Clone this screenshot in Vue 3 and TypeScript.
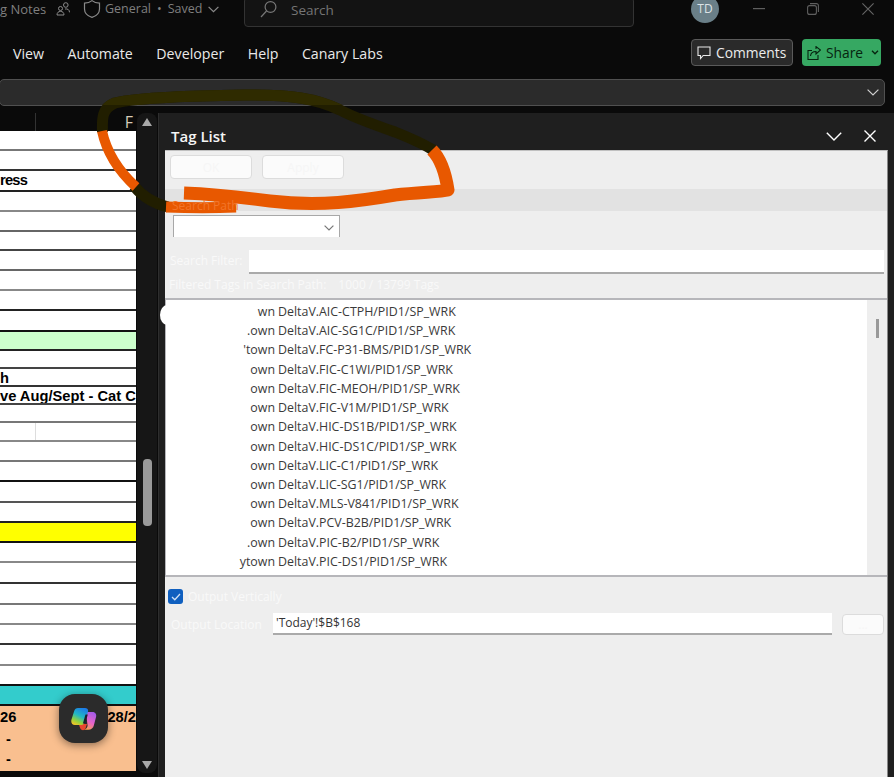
<script setup lang="ts">
interface SheetRow {
  h: number;
  line: string;
  bg?: string;
  text?: string;
  tight?: boolean;
  split?: boolean;
}

const sheetRows: SheetRow[] = [
  { h: 20, line: "#777" },
  { h: 20, line: "#333" },
  { h: 21, line: "#222", text: "ress", tight: true },
  { h: 20, line: "#888" },
  { h: 20, line: "#666" },
  { h: 19, line: "#444" },
  { h: 20, line: "#666" },
  { h: 20, line: "#888" },
  { h: 20, line: "#222" },
  { h: 21, line: "#111" },
  { h: 19, line: "#222", bg: "#ccffcc" },
  { h: 18, line: "#444" },
  { h: 18, line: "#333", text: "h" },
  { h: 18, line: "#444", text: "ve Aug/Sept - Cat C" },
  { h: 18, line: "#777" },
  { h: 19, line: "#888", split: true },
  { h: 20, line: "#777" },
  { h: 20, line: "#111" },
  { h: 21, line: "#555" },
  { h: 20, line: "#222" },
  { h: 20, line: "#111", bg: "#ffff00" },
  { h: 20, line: "#888" },
  { h: 21, line: "#333" },
  { h: 21, line: "#777" },
  { h: 20, line: "#888" },
  { h: 20, line: "#333" },
  { h: 21, line: "#888" },
  { h: 20, line: "#111" },
  { h: 20, line: "#111", bg: "#33cccc" },
];

const tags = [
  ["wn", "AIC-CTPH"],
  [".own", "AIC-SG1C"],
  ["'town", "FC-P31-BMS"],
  ["own", "FIC-C1WI"],
  ["own", "FIC-MEOH"],
  ["own", "FIC-V1M"],
  ["own", "HIC-DS1B"],
  ["own", "HIC-DS1C"],
  ["own", "LIC-C1"],
  ["own", "LIC-SG1"],
  ["own", "MLS-V841"],
  ["own", "PCV-B2B"],
  [".own", "PIC-B2"],
  ["ytown", "PIC-DS1"],
];

const tabs = ["View", "Automate", "Developer", "Help", "Canary Labs"];
const olive =
  "M102.500 132C102 118 102 108 115 103C140 97 200 96 250 95C290 95 315 98 340 110C355 118 372 124 395 132C410 138 422 143 433 150M134 186C142 196 152 203 168 207";
</script>

<template>
  <div class="app">
    <header class="titlebar">
      <span class="doc">g Notes</span>
      <svg class="people" width="14" height="14" viewBox="0 0 14 14" fill="none" stroke="#8a8a8a">
        <circle cx="4.5" cy="6.5" r="2" />
        <path d="M1 13c0-2.4 1.4-3.6 3.5-3.6S8 10.600 8 13z" />
        <circle cx="9.800" cy="3" r="2.300" />
        <path d="M9 7c2.600-.5 4.500.8 4.500 3.300" />
      </svg>
      <svg class="shield" width="18" height="18" viewBox="0 0 18 18" fill="none" stroke="#8a8a8a" stroke-width="1.200">
        <path d="M9 .6c2 1.700 4.500 2.500 7.500 2.500v5.800c0 4-2.500 6.800-7.500 8.500-5-1.700-7.500-4.500-7.500-8.500V3.100C4.500 3.100 7 2.300 9 .6z" />
      </svg>
      <span class="saved">General<i class="dot">•</i>Saved</span>
      <svg class="saved-chev" width="11" height="7" viewBox="0 0 11 7" fill="none" stroke="#8a8a8a" stroke-width="1.200">
        <path d="M.6.8l4.900 4.900L10.400.8" />
      </svg>
      <div class="searchbox">
        <svg width="17" height="18" viewBox="0 0 17 18" fill="none" stroke="#777" stroke-width="1.200">
          <circle cx="10.500" cy="6" r="5.400" />
          <path d="M6.500 10L1 16" />
        </svg>
        <span>Search</span>
      </div>
      <div class="avatar">TD</div>
      <svg class="win-min" width="12" height="2" viewBox="0 0 12 2"><rect width="12" height="1.200" fill="#5f5f5f" /></svg>
      <svg class="win-max" width="12" height="12" viewBox="0 0 12 12" fill="none" stroke="#5f5f5f" stroke-width="1.100">
        <rect x=".6" y="2.600" width="8.800" height="8.800" rx="2" />
        <path d="M3 .6h6.400A2 2 0 0 1 11.400 2.600V9" />
      </svg>
      <svg class="win-close" width="12" height="12" viewBox="0 0 12 12" stroke="#666" stroke-width="1.100">
        <path d="M.4.400l11.200 11.200M11.600.4L.4 11.600" />
      </svg>
    </header>

    <nav class="tabs">
      <span v-for="tab in tabs" :key="tab" class="tab">{{ tab }}</span>
      <button class="comments">
        <svg width="14" height="14" viewBox="0 0 14 14" fill="none" stroke="#e8e8e8" stroke-width="1.100">
          <path d="M1 1h12v8.500H6.200L3.500 12.500V9.500H1z" />
        </svg>
        Comments
      </button>
      <button class="share">
        <svg width="14" height="14" viewBox="0 0 14 14" fill="none" stroke="#06240f" stroke-width="1.100">
          <path d="M5 4.500H1v9h10V9" />
          <path d="M3.500 10c.3-3 2.500-4.500 5.500-4.500V8L13.500 4 9 .6v2.300" />
        </svg>
        Share
        <svg class="share-chev" width="8" height="5" viewBox="0 0 8 5" fill="none" stroke="#06240f" stroke-width="1.300">
          <path d="M1 .8l3 3 3-3" />
        </svg>
      </button>
    </nav>

    <div class="formula-row">
      <div class="formula">
        <svg width="12" height="7" viewBox="0 0 12 7" fill="none" stroke="#cfcfcf" stroke-width="1.200">
          <path d="M.6.600L6 6l5.400-5.400" />
        </svg>
      </div>
    </div>

    <main class="workspace">
      <section class="sheet">
        <div class="col-head">
          <i class="col-sep"></i>
          <span class="col-f">F</span>
        </div>
        <div
          v-for="(row, i) in sheetRows"
          :key="i"
          class="row"
          :style="{ height: row.h + 'px', borderBottomColor: row.line, background: row.bg }"
        >
          <span v-if="row.text" :class="{ tight: row.tight }">{{ row.text }}</span>
          <i v-if="row.split" class="cell-sep"></i>
        </div>
        <div class="totals">
          <div class="totals-head"><span>26</span><span>28/2</span></div>
          <div class="dash">-</div>
          <div class="dash">-</div>
        </div>
      </section>

      <div class="vscroll">
        <div class="track">
          <i class="arrow-up"></i>
          <i class="thumb"></i>
          <i class="arrow-down"></i>
        </div>
      </div>

      <aside class="pane">
        <div class="pane-title">
          <span>Tag List</span>
          <svg class="pane-chev" width="16" height="9" viewBox="0 0 16 9" fill="none" stroke="#fff" stroke-width="1.400">
            <path d="M.8.800L8 8l7.200-7.200" />
          </svg>
          <svg class="pane-x" width="12" height="12" viewBox="0 0 12 12" stroke="#fff" stroke-width="1.400">
            <path d="M.5.500l11 11M11.500.5l-11 11" />
          </svg>
        </div>
        <div class="pane-body">
          <div class="toolbar">
            <button class="ghost">OK</button>
            <button class="ghost">Apply</button>
          </div>
          <div class="section-head"><span>Search Path</span></div>
          <div class="select">
            <svg width="10" height="6" viewBox="0 0 10 6" fill="none" stroke="#777" stroke-width="1.200">
              <path d="M.6.600L5 5 9.400.6" />
            </svg>
          </div>
          <div class="filter-row">
            <label>Search Filter:</label>
            <div class="field"></div>
          </div>
          <div class="count-row">
            <span>Filtered Tags in Search Path:</span>
            <span>1000 / 13799 Tags</span>
          </div>
          <div class="list">
            <i class="bump"></i>
            <ul>
              <li v-for="tag in tags" :key="tag[1]">
                <span class="prefix">{{ tag[0] }}</span>
                <span>DeltaV.{{ tag[1] }}/PID1/SP_WRK</span>
              </li>
            </ul>
            <div class="list-scroll"><i></i></div>
          </div>
          <div class="check-row">
            <span class="check">
              <svg width="10" height="8" viewBox="0 0 10 8" fill="none" stroke="#cfe0f5" stroke-width="1.300">
                <path d="M1 4l2.800 2.800L9 1" />
              </svg>
            </span>
            <span>Output Vertically</span>
          </div>
          <div class="location-row">
            <label>Output Location</label>
            <div class="field loc">'Today'!$B$168</div>
            <button class="ghost small">...</button>
          </div>
        </div>
      </aside>
    </main>

    <div class="copilot">
      <svg width="26" height="26" viewBox="0 0 26 26">
        <defs>
          <linearGradient id="lobeA" x1="0.700" y1="0" x2="0.200" y2="1">
            <stop offset="0" stop-color="#1c7be8" />
            <stop offset="0.450" stop-color="#21b8c4" />
            <stop offset="0.750" stop-color="#8fd13f" />
            <stop offset="1" stop-color="#f7c325" />
          </linearGradient>
          <linearGradient id="lobeB" x1="0.700" y1="0" x2="0.300" y2="1">
            <stop offset="0" stop-color="#a35be8" />
            <stop offset="0.550" stop-color="#e764c8" />
            <stop offset="1" stop-color="#f8a04b" />
          </linearGradient>
        </defs>
        <path fill="url(#lobeB)" d="M15 6h6.500c2.800 0 4.200 2.300 3.600 4.800l-2.200 8.400c-.7 2.800-2.700 4.600-5.600 4.600H12c2.500 0 4-1.500 4.600-3.700z" />
        <path fill="#e8452f" d="M8 18h8l-1.500 4.500c-.5 1.100-1.500 1.700-2.500 1.700-2.300 0-3.400-2.700-4-6.200z" />
        <path fill="url(#lobeA)" d="M7 2h7c2.300 0 3.500 1.400 3 3.600l-2.800 10c-.7 2.400-1.900 3.400-4 3.400H4c-3 0-4.300-2.600-3.500-5.400L3.200 5C3.800 3 5.100 2 7 2z" />
        <path fill="#1d1d2b" d="M14.500 8.500h2.300l-2.600 9h-2.300z" />
      </svg>
    </div>

    <svg class="scribble" width="894" height="777" viewBox="0 0 894 777" fill="none" stroke-linejoin="round">
      <defs>
        <clipPath id="barClip"><rect x="0" y="80" width="894" height="25" /></clipPath>
      </defs>
      <path stroke="#211e00" stroke-width="11" :d="olive" />
      <path stroke="#2f2b00" stroke-width="11" clip-path="url(#barClip)" :d="olive" />
      <path stroke="#e85800" stroke-width="10" d="M102 131C105 145 112 165 136 187" />
      <path
        stroke="#e85800"
        stroke-width="13"
        d="M432 150C440 158 445 170 448 190C440 192 420 192 395 195C360 201 320 207 270 201C240 197 210 194 184 193"
      />
      <path stroke="#e85800" stroke-width="11" d="M166 207C190 208 215 208 236 207" />
    </svg>
  </div>
</template>

<style scoped>
.app {
  position: relative;
  display: flex;
  flex-direction: column;
  width: 894px;
  height: 777px;
  overflow: hidden;
  background: #0a0a0a;
  font-family: "Open Sans", "Noto Sans", sans-serif;
}

button {
  font-family: inherit;
  padding: 0;
}

/* title bar */
.titlebar {
  display: flex;
  align-items: flex-start;
  height: 26px;
  flex: none;
  color: #7f7f7f;
  font-size: 13px;
  line-height: 18px;
}

.doc {
  width: 56px;
}

.people {
  margin-top: 2px;
}

.shield {
  margin-left: 13px;
}

.saved {
  margin-left: 4px;
  width: 103px;
  font-size: 12.500px;
  white-space: nowrap;
}

.dot {
  margin: 0 6px;
  font-style: normal;
}

.saved-chev {
  margin-top: 6px;
}

.searchbox {
  display: flex;
  align-items: flex-start;
  gap: 14px;
  box-sizing: border-box;
  width: 390px;
  height: 30px;
  margin-top: -3px;
  margin-left: 25px;
  padding: 3px 0 0 15px;
  border: 1px solid #333;
  border-radius: 4px;
  background: #131313;
  color: #757575;
  font-size: 13.500px;
}

.avatar {
  width: 28px;
  height: 28px;
  margin-top: -5px;
  margin-left: 57px;
  border-radius: 50%;
  background: #6a7f88;
  color: #dce3e6;
  font-size: 12px;
  line-height: 27px;
  text-align: center;
}

.win-min {
  margin-top: 8px;
  margin-left: 34px;
}

.win-max {
  margin-top: 3px;
  margin-left: 42px;
}

.win-close {
  margin-top: 3px;
  margin-left: 43px;
}

/* ribbon tabs */
.tabs {
  display: flex;
  align-items: center;
  gap: 23.500px;
  flex: none;
  box-sizing: border-box;
  height: 53px;
  padding: 13px;
  color: #e9e9e9;
  font-size: 14.200px;
}

.tab {
  margin-top: 2px;
}

.comments,
.share {
  display: flex;
  align-items: center;
  box-sizing: border-box;
  height: 27px;
  border-radius: 4px;
  font-size: 13.800px;
}

.comments {
  gap: 5px;
  width: 102px;
  margin-left: auto;
  padding-left: 5px;
  border: 1px solid #5a5a5a;
  background: #2a2a2a;
  color: #ececec;
}

.share {
  gap: 5px;
  width: 79px;
  margin-left: -14.500px;
  padding-left: 5px;
  border: none;
  background: #36a862;
  color: #06240f;
}

.share-chev {
  margin-left: 3px;
}

/* formula bar */
.formula-row {
  flex: none;
  height: 34px;
}

.formula {
  display: flex;
  align-items: center;
  justify-content: flex-end;
  box-sizing: border-box;
  width: 886px;
  height: 27px;
  margin-left: -1px;
  padding-right: 5px;
  border: 1px solid #505050;
  border-radius: 5px;
  background: #2b2b2b;
}

/* main area */
.workspace {
  display: flex;
  flex: 1;
  min-height: 0;
}

.sheet {
  width: 136px;
  flex: none;
  font-family: "Liberation Sans", Arial, sans-serif;
  font-size: 14.700px;
  font-weight: 700;
  color: #000;
}

.col-head {
  position: relative;
  display: flex;
  justify-content: flex-end;
  height: 18px;
  padding-right: 3px;
}

.col-sep {
  position: absolute;
  left: 35px;
  top: 0;
  bottom: 0;
  width: 1px;
  background: #333;
}

.col-f {
  color: #d9cbb8;
  font-family: "Open Sans", sans-serif;
  font-size: 16px;
  font-weight: 400;
  line-height: 18px;
}

.row {
  position: relative;
  box-sizing: border-box;
  border-bottom: 2px solid #444;
  background: #fff;
  line-height: 19px;
  white-space: nowrap;
  overflow: hidden;
}

.tight {
  letter-spacing: -0.8px;
}

.cell-sep {
  position: absolute;
  left: 35px;
  top: 0;
  bottom: 0;
  width: 1px;
  background: #ddd;
}

.totals {
  height: 65px;
  background: #f9bf8f;
}

.totals-head {
  display: flex;
  justify-content: space-between;
  height: 23px;
  line-height: 22px;
  overflow: hidden;
}

.dash {
  height: 20px;
  padding-left: 6px;
  line-height: 20px;
}

/* sheet scrollbar */
.vscroll {
  width: 22px;
  flex: none;
}

.track {
  display: flex;
  flex-direction: column;
  align-items: center;
  box-sizing: border-box;
  width: 20px;
  height: 660px;
  margin-left: 1px;
  padding: 5px 0 4px;
  border-radius: 8px;
  background: #161616;
}

.arrow-up,
.arrow-down {
  width: 0;
  height: 0;
  border-left: 5.500px solid transparent;
  border-right: 5.500px solid transparent;
}

.arrow-up {
  border-bottom: 8px solid #a8a8a8;
}

.arrow-down {
  margin-top: auto;
  border-top: 8px solid #a8a8a8;
}

.thumb {
  width: 9px;
  height: 67px;
  margin-top: 333px;
  border-radius: 4px;
  background: #9a9a9a;
}

/* tag list pane */
.pane {
  display: flex;
  flex-direction: column;
  flex: 1;
  min-width: 0;
  box-sizing: border-box;
  padding: 0 6px;
  border-left: 1px solid #2e2e2e;
  background: #1f1f1f;
}

.pane-title {
  display: flex;
  align-items: center;
  flex: none;
  height: 37px;
  padding: 9px 12px 0 6px;
  box-sizing: border-box;
  color: #f5f5f5;
  font-size: 15px;
  font-weight: 600;
}

.pane-chev {
  margin-left: auto;
}

.pane-x {
  margin-left: 22px;
}

.pane-body {
  display: flex;
  flex-direction: column;
  flex: 1;
  min-height: 0;
  border-top: 1px solid #c0c0c0;
  border-right: 1px solid #888;
  background: #eeeeee;
  color: #f9f9f9;
  font-size: 12px;
}

.toolbar {
  display: flex;
  gap: 10px;
  flex: none;
  box-sizing: border-box;
  height: 38px;
  padding: 4px 5px;
}

.ghost {
  width: 82px;
  height: 24px;
  border: 1px solid #dcdcdc;
  border-radius: 4px;
  background: #fbfbfb;
  color: #f6f6f6;
  font-size: 12px;
}

.ghost.small {
  width: 42px;
  height: 21px;
  margin-left: 10px;
}

.section-head {
  flex: none;
  height: 22px;
  padding-left: 7px;
  background: #e2e2e2;
  line-height: 34px;
}

.section-head span {
  position: relative;
  z-index: 2;
  color: #f2752a;
}

.select {
  display: flex;
  align-items: center;
  justify-content: flex-end;
  flex: none;
  box-sizing: border-box;
  width: 167px;
  height: 22px;
  margin: 4px 0 0 8px;
  padding: 2px 5px 0 0;
  border: 1px solid #a8a8a8;
  border-bottom: 0;
  background: #fff;
}

.filter-row {
  display: flex;
  align-items: center;
  flex: none;
  height: 24px;
  margin-top: 13px;
  padding: 0 3px 0 5px;
}

.filter-row label {
  width: 79px;
  margin-top: -3px;
}

.field {
  flex: 1;
  box-sizing: border-box;
  height: 24px;
  border-bottom: 2px solid #aaa;
  background: #fff;
}

.count-row {
  display: flex;
  align-items: center;
  gap: 12px;
  flex: none;
  height: 20px;
  padding-left: 4px;
  margin-bottom: 4px;
}

.list {
  position: relative;
  display: flex;
  flex: none;
  box-sizing: border-box;
  height: 279px;
  border-top: 2px solid #b6b6ba;
  border-bottom: 2px solid #b6b6ba;
  border-left: 1px solid #b6b6ba;
  background: #fff;
  color: #3a3a3a;
  font-size: 12.400px;
}

.bump {
  position: absolute;
  left: -6px;
  top: 5px;
  width: 14px;
  height: 20px;
  border-radius: 50%;
  background: #fff;
}

.list ul {
  flex: 1;
  margin: 0;
  padding: 2px 0 0;
  list-style: none;
}

.list li {
  display: flex;
  gap: 3px;
  height: 19.230px;
  line-height: 19px;
  white-space: nowrap;
}

.prefix {
  width: 109px;
  text-align: right;
}

.list-scroll {
  display: flex;
  justify-content: center;
  width: 20px;
  background: #eeeeee;
}

.list-scroll i {
  width: 3px;
  height: 19px;
  margin-top: 19px;
  background: #999;
}

.check-row {
  display: flex;
  align-items: center;
  gap: 5px;
  flex: none;
  height: 15px;
  margin-top: 12px;
  padding-left: 3px;
}

.check {
  display: flex;
  align-items: center;
  justify-content: center;
  width: 15px;
  height: 15px;
  border-radius: 3px;
  background: #0f5fbf;
}

.location-row {
  display: flex;
  align-items: center;
  flex: none;
  height: 22px;
  margin-top: 9px;
  padding: 0 3px 0 6px;
}

.location-row label {
  width: 102px;
}

.loc {
  height: 22px;
  padding-left: 3px;
  color: #333;
  line-height: 20px;
}

/* floating bits */
.copilot {
  position: absolute;
  left: 59px;
  top: 694px;
  display: flex;
  align-items: center;
  justify-content: center;
  width: 49px;
  height: 49px;
  border-radius: 16px;
  background: #2b2b2b;
  box-shadow: 0 2px 8px rgba(0, 0, 0, 0.45);
}

.scribble {
  position: absolute;
  left: 0;
  top: 0;
  z-index: 1;
  pointer-events: none;
}
</style>

<style>
html,
body {
  background: #fff;
}
</style>
